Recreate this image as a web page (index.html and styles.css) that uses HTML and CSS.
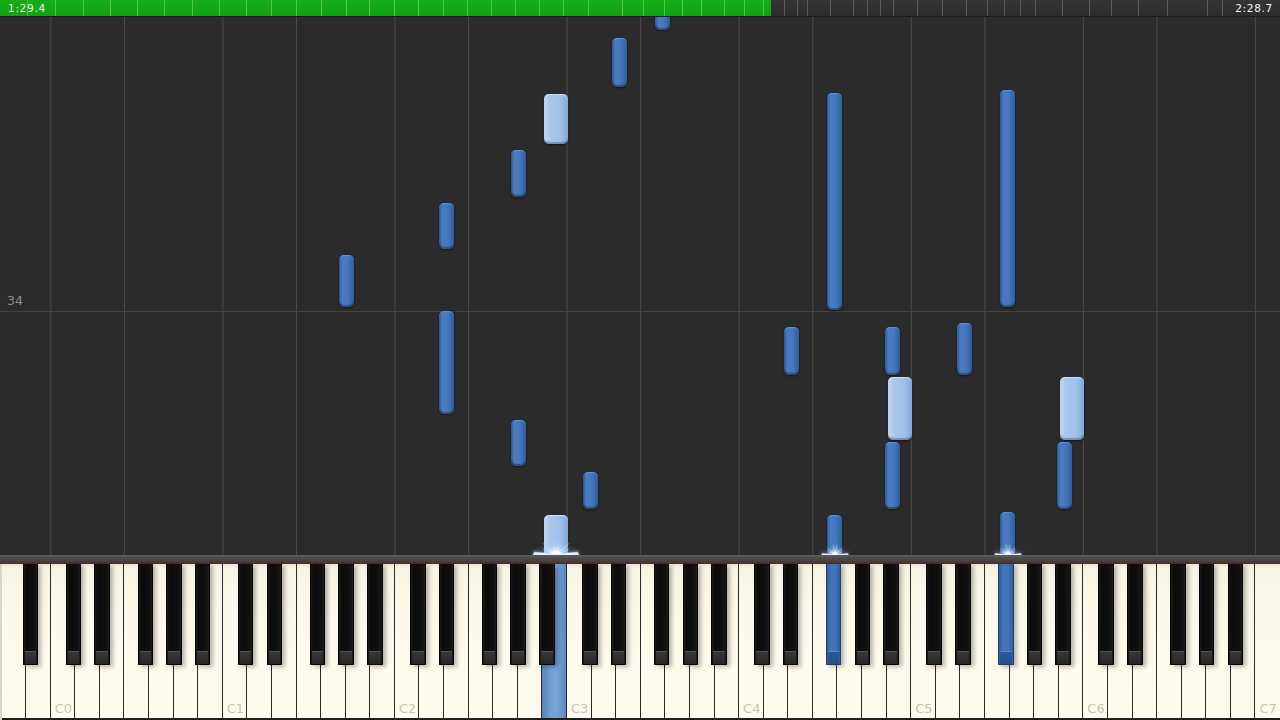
FILE: index.html
```html
<!DOCTYPE html>
<html>
<head>
<meta charset="utf-8">
<link rel="stylesheet" href="styles.css">
</head>
<body>
<div class="app">
  <div class="topbar">
    <div class="fill" style="width:771px"></div>
    <div class="ticks">
      <i class="t on" style="left:27px"></i><i class="t on" style="left:55px"></i><i class="t on" style="left:83px"></i><i class="t on" style="left:110px"></i><i class="t on" style="left:137px"></i><i class="t on" style="left:164px"></i><i class="t on" style="left:192px"></i><i class="t on" style="left:219px"></i><i class="t on" style="left:246px"></i><i class="t on" style="left:271px"></i><i class="t on" style="left:296px"></i><i class="t on" style="left:321px"></i><i class="t on" style="left:346px"></i><i class="t on" style="left:369px"></i><i class="t on" style="left:394px"></i><i class="t on" style="left:418px"></i><i class="t on" style="left:443px"></i><i class="t on" style="left:467px"></i><i class="t on" style="left:491px"></i><i class="t on" style="left:515px"></i><i class="t on" style="left:539px"></i><i class="t on" style="left:563px"></i><i class="t on" style="left:588px"></i><i class="t on" style="left:622px"></i><i class="t on" style="left:643px"></i><i class="t on" style="left:664px"></i><i class="t on" style="left:682px"></i><i class="t on" style="left:701px"></i><i class="t on" style="left:724px"></i><i class="t on" style="left:744px"></i><i class="t on" style="left:763px"></i>
      <i class="t" style="left:784px"></i><i class="t" style="left:797px"></i><i class="t" style="left:807px"></i><i class="t" style="left:830px"></i><i class="t" style="left:853px"></i><i class="t" style="left:867px"></i><i class="t" style="left:880px"></i><i class="t" style="left:893px"></i><i class="t" style="left:917px"></i><i class="t" style="left:942px"></i><i class="t" style="left:966px"></i><i class="t" style="left:987px"></i><i class="t" style="left:1004px"></i><i class="t" style="left:1020px"></i><i class="t" style="left:1035px"></i><i class="t" style="left:1062px"></i><i class="t" style="left:1089px"></i><i class="t" style="left:1111px"></i><i class="t" style="left:1138px"></i><i class="t" style="left:1167px"></i><i class="t" style="left:1207px"></i><i class="t" style="left:1222px"></i>
    </div>
    <div class="times"><span>1:29.4</span><span>2:28.7</span></div>
  </div>

  <div class="field">
    <div class="measure"></div>
    <span class="mnum">34</span>

    <div class="note blk" style="left:655px;top:-21px;height:34px"></div>
    <div class="note blk" style="left:612px;top:21px;height:49px"></div>
    <div class="note wht" style="left:543.5px;top:77px;height:50px"></div>
    <div class="note blk" style="left:511px;top:133px;height:47px"></div>
    <div class="note blk" style="left:439px;top:186px;height:46px"></div>
    <div class="note blk" style="left:339px;top:238px;height:52px"></div>
    <div class="note blk" style="left:827px;top:76px;height:217px"></div>
    <div class="note blk" style="left:1000px;top:73px;height:217px"></div>
    <div class="note blk" style="left:439px;top:294px;height:103px"></div>
    <div class="note blk" style="left:784px;top:310px;height:48px"></div>
    <div class="note blk" style="left:885px;top:310px;height:48px"></div>
    <div class="note blk" style="left:957px;top:306px;height:52px"></div>
    <div class="note wht" style="left:888px;top:360px;height:63px"></div>
    <div class="note wht" style="left:1060px;top:360px;height:63px"></div>
    <div class="note blk" style="left:511px;top:403px;height:46px"></div>
    <div class="note blk" style="left:583px;top:455px;height:37px"></div>
    <div class="note blk" style="left:885px;top:425px;height:67px"></div>
    <div class="note blk" style="left:1057px;top:425px;height:67px"></div>
    <div class="note wht hit" style="left:543.5px;top:498px;height:46px"></div>
    <div class="note blk hit" style="left:827px;top:498px;height:46px"></div>
    <div class="note blk hit" style="left:1000px;top:495px;height:49px"></div>

    <svg class="spark big" style="left:532.5px" viewBox="0 0 46 22">
      <defs><radialGradient id="sg" cx="50%" cy="100%" r="75%"><stop offset="0" stop-color="#ffffff"/><stop offset="0.45" stop-color="#f2f7ff"/><stop offset="1" stop-color="#b6cff3"/></radialGradient></defs>
      <polygon fill="url(#sg)" stroke="#a9c6f0" stroke-width="0.4" points="1.2,18.9 18.2,20.6 10.3,16.1 18.8,19.2 10.4,10.6 19.9,18.1 17.4,11.4 21.4,17.3 19.9,4.3 23,17 26.1,4.3 24.6,17.3 28.6,11.4 26.1,18.1 35.6,10.6 27.2,19.2 35.7,16.1 27.8,20.6 44.8,18.9 46,22 0,22"/>
    </svg>
    <svg class="spark small" style="left:820.5px" viewBox="0 0 46 22">
      <polygon fill="url(#sg)" stroke="#a9c6f0" stroke-width="0.4" points="1.2,18.9 18.2,20.6 10.3,16.1 18.8,19.2 10.4,10.6 19.9,18.1 17.4,11.4 21.4,17.3 19.9,4.3 23,17 26.1,4.3 24.6,17.3 28.6,11.4 26.1,18.1 35.6,10.6 27.2,19.2 35.7,16.1 27.8,20.6 44.8,18.9 46,22 0,22"/>
    </svg>
    <svg class="spark small" style="left:993.5px" viewBox="0 0 46 22">
      <polygon fill="url(#sg)" stroke="#a9c6f0" stroke-width="0.4" points="1.2,18.9 18.2,20.6 10.3,16.1 18.8,19.2 10.4,10.6 19.9,18.1 17.4,11.4 21.4,17.3 19.9,4.3 23,17 26.1,4.3 24.6,17.3 28.6,11.4 26.1,18.1 35.6,10.6 27.2,19.2 35.7,16.1 27.8,20.6 44.8,18.9 46,22 0,22"/>
    </svg>
  </div>

  <div class="rail"></div>

  <div class="keys">
    <div class="grp g0">
      <div class="wk"></div><div class="wk"></div>
      <div class="bk as0"></div>
    </div>

    <div class="grp oct">
      <div class="wk"><span class="lbl">C0</span></div><div class="wk"></div><div class="wk"></div><div class="wk"></div><div class="wk"></div><div class="wk"></div><div class="wk"></div>
      <div class="bk cs"></div><div class="bk ds"></div><div class="bk fs"></div><div class="bk gs"></div><div class="bk as"></div>
    </div>
    <div class="grp oct">
      <div class="wk"><span class="lbl">C1</span></div><div class="wk"></div><div class="wk"></div><div class="wk"></div><div class="wk"></div><div class="wk"></div><div class="wk"></div>
      <div class="bk cs"></div><div class="bk ds"></div><div class="bk fs"></div><div class="bk gs"></div><div class="bk as"></div>
    </div>
    <div class="grp oct">
      <div class="wk"><span class="lbl">C2</span></div><div class="wk"></div><div class="wk"></div><div class="wk"></div><div class="wk"></div><div class="wk"></div><div class="wk on"></div>
      <div class="bk cs"></div><div class="bk ds"></div><div class="bk fs"></div><div class="bk gs"></div><div class="bk as"></div>
    </div>
    <div class="grp oct">
      <div class="wk"><span class="lbl">C3</span></div><div class="wk"></div><div class="wk"></div><div class="wk"></div><div class="wk"></div><div class="wk"></div><div class="wk"></div>
      <div class="bk cs"></div><div class="bk ds"></div><div class="bk fs"></div><div class="bk gs"></div><div class="bk as"></div>
    </div>
    <div class="grp oct">
      <div class="wk"><span class="lbl">C4</span></div><div class="wk"></div><div class="wk"></div><div class="wk"></div><div class="wk"></div><div class="wk"></div><div class="wk"></div>
      <div class="bk cs"></div><div class="bk ds"></div><div class="bk fs on"></div><div class="bk gs"></div><div class="bk as"></div>
    </div>
    <div class="grp oct">
      <div class="wk"><span class="lbl">C5</span></div><div class="wk"></div><div class="wk"></div><div class="wk"></div><div class="wk"></div><div class="wk"></div><div class="wk"></div>
      <div class="bk cs"></div><div class="bk ds"></div><div class="bk fs on"></div><div class="bk gs"></div><div class="bk as"></div>
    </div>
    <div class="grp oct">
      <div class="wk"><span class="lbl">C6</span></div><div class="wk"></div><div class="wk"></div><div class="wk"></div><div class="wk"></div><div class="wk"></div><div class="wk"></div>
      <div class="bk cs"></div><div class="bk ds"></div><div class="bk fs"></div><div class="bk gs"></div><div class="bk as"></div>
    </div>

    <div class="grp g8">
      <div class="wk last"><span class="lbl">C7</span></div>
    </div>
  </div>
</div>
</body>
</html>
```

FILE: styles.css
```css
* { box-sizing: border-box; }
html, body { margin: 0; padding: 0; background: #2b2b2b; }
.app { width: 1280px; height: 720px; display: flex; flex-direction: column; overflow: hidden; font-family: "DejaVu Sans", sans-serif; }

.topbar { position: relative; height: 17px; flex: none; background: linear-gradient(#343434, #2d2d2d); border-bottom: 1px solid #1c1c1c; }
.fill { position: absolute; left: 0; top: 0; bottom: 0; background: linear-gradient(#17ad17, #11a111); }
.ticks { position: absolute; inset: 0; }
.t { position: absolute; top: 0; bottom: 0; width: 1px; background: #5a5a5a; }
.t.on { background: #52c552; }
.times { position: relative; display: flex; justify-content: space-between; align-items: center; height: 16px; padding: 0 7px 0 8px; color: #f4f4f4; font-size: 10.5px; letter-spacing: 0.7px; }

.field { position: relative; height: 538px; flex: none; overflow: hidden;
  background-color: #2b2b2b;
  background-image: linear-gradient(to right, #4a4a4a 0, #4a4a4a 1px, transparent 1px, transparent 73.7px, #4a4a4a 73.7px, #4a4a4a 74.7px, transparent 74.7px);
  background-size: 172.1px 100%;
  background-position: 50.3px 0;
  background-repeat: repeat-x;
}
.measure { position: absolute; left: 0; right: 0; top: 294px; height: 1px; background: #434343; }
.mnum { position: absolute; left: 7px; top: 276px; color: #8c8c8c; font-size: 12.5px; }

.note { position: absolute; width: 15px; border-radius: 5px; }
.note.blk { background: linear-gradient(to right, #2c5593 0%, #4a7cc1 22%, #4676bb 60%, #2f5e9f 100%); box-shadow: inset 0 -2px 1px rgba(10,30,70,.45), inset 0 1px 1px rgba(160,195,240,.35), 0 1px 2px rgba(0,0,0,.55); }
.note.wht { width: 24px; background: linear-gradient(to right, #c4d8f1 0%, #abc7eb 25%, #a0bfe7 70%, #86a8d8 100%); box-shadow: inset 0 -2px 1px rgba(50,80,130,.45), inset 0 1px 1px rgba(255,255,255,.5), 0 1px 2px rgba(0,0,0,.55); }
.note.hit { border-radius: 5px 5px 0 0; }

.spark { position: absolute; bottom: 0; overflow: visible; filter: drop-shadow(0 0 2px rgba(170,205,255,.8)); }
.spark.big { width: 46px; height: 22px; }
.spark.small { width: 28px; height: 13px; }

.rail { height: 8px; flex: none; background: linear-gradient(#5d5d5d, #4a4a4a 40%, #3c3c3c); }

.keys { height: 157px; flex: none; display: flex; padding-left: 1.5px; background: #d9d5c6; border-top: 1px solid #6e1c1c; }
.grp { position: relative; display: flex; }
.g0 { flex: 2; }
.oct { flex: 7; }
.g8 { flex: 1; }
.wk { flex: 1; display: flex; flex-direction: column; justify-content: flex-end; padding: 0 0 2px 4px;
  background: linear-gradient(#e9e4d2 0, #f8f4e3 4px, #fdf9ea 30%, #fffbee 100%);
  border-right: 1px solid #2a2a2a; border-bottom: 2px solid #1e1e1e; }
.wk.last { border-right: none; }
.wk.on { background: linear-gradient(to right, #5583c1 0%, #77a0d6 40%, #7aa3d8 60%, #5a89c6 100%); }
.lbl { font-size: 13px; line-height: 15px; color: #c8c3b3; }

.bk { position: absolute; top: 0; width: 15.5px; height: 101px; border: 1px solid #050505; border-top: none;
  background: linear-gradient(to right, #1a1a1a 0, #0b0b0b 20%, #101010 80%, #1c1c1c 100%);
  box-shadow: 3px 2px 4px rgba(0,0,0,.28); border-radius: 0 0 1px 1px; }
.bk::after { content: ""; position: absolute; left: 1px; right: 1px; bottom: 0; height: 12px;
  background: linear-gradient(#363636, #262626); border-top: 1px solid #555; }
.bk.on { background: linear-gradient(to right, #2f5c9c 0, #4574b8 30%, #4272b5 70%, #2f5c9c 100%); border-color: #1f3f6e; }
.bk.on::after { background: linear-gradient(#2d5896, #27508c); border-top-color: #5b87c2; }

.as0 { left: 21.3px; }
.cs { left: calc(8.333% + 0.8px); }
.ds { left: calc(25% + 0.8px); }
.fs { left: calc(50% + 0.8px); }
.gs { left: calc(66.667% + 0.8px); }
.as { left: calc(83.333% + 0.8px); }
```
